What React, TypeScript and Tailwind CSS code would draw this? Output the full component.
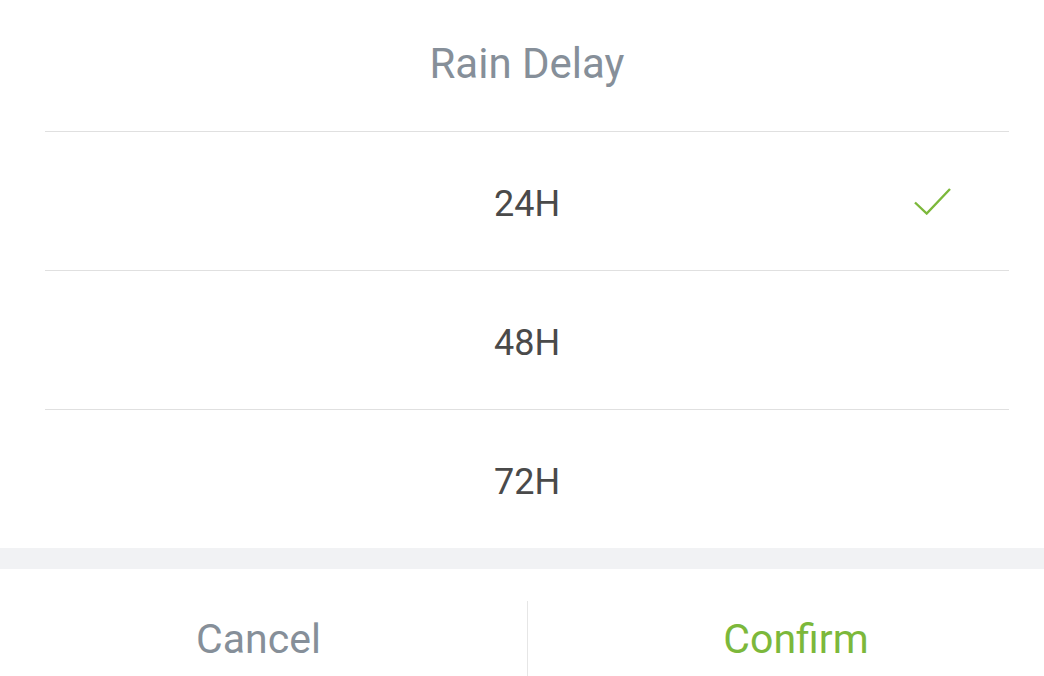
const options = ["24H", "48H", "72H"];

export default function App() {
  const selected = "24H";

  return (
    <div className="flex h-[676px] w-[1044px] flex-col overflow-hidden bg-white font-['Roboto',sans-serif]">
      <div className="flex h-[131px] shrink-0 items-center justify-center pb-[4px] pl-[10px] text-[42px] text-[#868f99]">
        Rain Delay
      </div>

      <div className="ml-[45px] mr-[35px] shrink-0">
        {options.map((opt) => (
          <div
            key={opt}
            className="relative flex h-[139px] items-center justify-center border-t border-[#e0e0e0] pt-[5px] text-[36px] text-[#4a4a4a]"
          >
            {opt}
            {opt === selected && (
              <svg
                className="absolute right-[58px] top-[56px]"
                width="37"
                height="27"
                viewBox="0 0 37 27"
                fill="none"
              >
                <path d="M1 14.5 L12.7 25.5 L36 1" stroke="#7cb83b" strokeWidth="2.4" />
              </svg>
            )}
          </div>
        ))}
      </div>

      <div className="h-[21px] shrink-0 bg-[#f1f2f4]" />

      <div className="flex shrink-0 pt-[32px]">
        <button className="flex h-[80px] w-[527px] items-start justify-center pr-[10px] pt-[8px] text-[41px] text-[#868f99]">
          Cancel
        </button>
        <button className="flex h-[80px] flex-1 items-start justify-center border-l border-[#e6e6e6] pl-[20px] pt-[8px] text-[41px] text-[#7cb83b]">
          Confirm
        </button>
      </div>
    </div>
  );
}
